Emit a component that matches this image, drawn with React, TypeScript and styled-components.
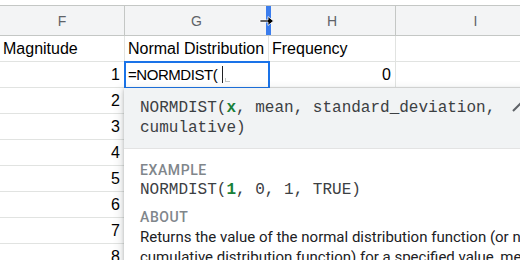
import React from 'react';
import styled, { createGlobalStyle } from 'styled-components';

const GlobalStyle = createGlobalStyle`
  html, body {
    margin: 0;
    padding: 0;
    background: #ffffff;
    overflow: hidden;
  }
`;

const Sheet = styled.div`
  position: relative;
  width: 520px;
  height: 260px;
  padding-top: 5px;
  box-sizing: border-box;
  overflow: hidden;
  font-family: 'Liberation Sans', Arial, sans-serif;
`;

const Grid = styled.div`
  display: grid;
  grid-template-columns: 125px 144px 127px 160px;
  grid-auto-rows: auto;
`;

const HeaderCell = styled.div`
  position: relative;
  height: 29px;
  display: flex;
  align-items: center;
  justify-content: center;
  background: #f3f4f5;
  border-top: 1px solid #c4c7c5;
  border-bottom: 1px solid #c4c7c5;
  border-right: 1px solid #c4c7c5;
  color: #5f6368;
  font-size: 14px;
`;

const ResizeHandle = styled.div`
  position: absolute;
  top: 0;
  bottom: 0;
  right: -3px;
  width: 5px;
  background: #3b7ded;
  z-index: 4;
`;

const ResizeCursor = styled.svg`
  position: absolute;
  top: 8px;
  right: -6px;
  z-index: 5;
`;

const Cell = styled.div<{ $align?: 'left' | 'right'; $selected?: boolean }>`
  position: relative;
  height: 25px;
  display: flex;
  align-items: center;
  justify-content: ${(p) => (p.$align === 'right' ? 'flex-end' : 'flex-start')};
  padding: 0 4px 0 3px;
  border-right: 1px solid #e1e3e1;
  border-bottom: 1px solid #e1e3e1;
  color: #000000;
  font-size: 16px;
  white-space: nowrap;
  overflow: visible;
  ${(p) =>
    p.$selected &&
    `
    outline: 2px solid #1a73e8;
    outline-offset: -1px;
    z-index: 2;
  `}
`;

const EditText = styled.span`
  font-size: 15px;
  letter-spacing: -0.45px;
  color: #000000;
`;

const Caret = styled.span`
  display: inline-block;
  width: 1px;
  height: 17px;
  margin-left: 5px;
  background: #202124;
`;

const CaretMark = styled.span`
  display: inline-block;
  width: 4px;
  height: 3px;
  margin-left: 2px;
  margin-top: 10px;
  border-left: 1px solid #c4c7c5;
  border-bottom: 1px solid #c4c7c5;
`;

const Popup = styled.div`
  position: absolute;
  left: 124px;
  top: 88px;
  width: 470px;
  background: #ffffff;
  box-shadow: 0 1px 3px rgba(60, 64, 67, 0.3), 0 4px 8px 3px rgba(60, 64, 67, 0.15);
  z-index: 3;
`;

const Signature = styled.div`
  display: flex;
  align-items: flex-start;
  padding: 10px 0 10px 16px;
  background: #f1f3f4;
  border-bottom: 1px solid #e3e3e3;
`;

const Code = styled.div`
  font-family: 'Liberation Mono', 'Courier New', monospace;
  font-size: 16px;
  line-height: 20px;
  color: #3c4043;
`;

const SignatureCode = styled(Code)`
  width: 372px;
  flex: none;
`;

const Arg = styled.b`
  color: #188038;
  font-weight: bold;
`;

const Body = styled.div`
  padding: 11px 15px 0 16px;
`;

const Label = styled.div<{ $gap?: number }>`
  margin-top: ${(p) => p.$gap ?? 0}px;
  font-family: Roboto, 'Liberation Sans', sans-serif;
  font-weight: 500;
  font-size: 14px;
  line-height: 20px;
  letter-spacing: 0.6px;
  color: #80868b;
`;

const About = styled.div`
  font-family: Roboto, 'Liberation Sans', sans-serif;
  font-size: 15px;
  line-height: 20px;
  color: #202124;
`;

const columns = ['F', 'G', 'H', 'I'];

const rows: { f: string; g?: string; h?: string; fAlign?: 'left' | 'right' }[] = [
  { f: 'Magnitude', g: 'Normal Distribution', h: 'Frequency', fAlign: 'left' },
  { f: '1', h: '0', fAlign: 'right' },
  { f: '2', fAlign: 'right' },
  { f: '3', fAlign: 'right' },
  { f: '4', fAlign: 'right' },
  { f: '5', fAlign: 'right' },
  { f: '6', fAlign: 'right' },
  { f: '7', fAlign: 'right' },
  { f: '8', fAlign: 'right' },
];

const App: React.FC = () => {
  return (
    <Sheet>
      <GlobalStyle />
      <Grid>
        {columns.map((c) => (
          <HeaderCell key={c}>
            {c}
            {c === 'G' && (
              <>
                <ResizeHandle />
                <ResizeCursor width="15" height="14" viewBox="0 0 15 14">
                  <path
                    d="M1 6h8V2.5l5.5 4.5L9 11.5V8H1z"
                    fill="#000"
                    stroke="#fff"
                    strokeWidth="0.8"
                  />
                </ResizeCursor>
              </>
            )}
          </HeaderCell>
        ))}
        {rows.map((r, i) => (
          <React.Fragment key={i}>
            <Cell $align={r.fAlign}>{r.f}</Cell>
            {i === 1 ? (
              <Cell $selected>
                <EditText>=NORMDIST(</EditText>
                <Caret />
                <CaretMark />
              </Cell>
            ) : (
              <Cell>{r.g}</Cell>
            )}
            <Cell $align={i === 0 ? 'left' : 'right'}>{r.h}</Cell>
            <Cell />
          </React.Fragment>
        ))}
      </Grid>
      <Popup>
        <Signature>
          <SignatureCode>
            NORMDIST(<Arg>x</Arg>, mean, standard_deviation, cumulative)
          </SignatureCode>
          <svg width="16" height="20" viewBox="0 0 16 20">
            <path d="M1 13l7-7 7 7" fill="none" stroke="#5f6368" strokeWidth="2" />
          </svg>
        </Signature>
        <Body>
          <Label>EXAMPLE</Label>
          <Code>
            NORMDIST(<Arg>1</Arg>, 0, 1, TRUE)
          </Code>
          <Label $gap={7}>ABOUT</Label>
          <About>
            Returns the value of the normal distribution function (or normal cumulative
            distribution function) for a specified value, mean, and standard deviation.
          </About>
        </Body>
      </Popup>
    </Sheet>
  );
};

export default App;
